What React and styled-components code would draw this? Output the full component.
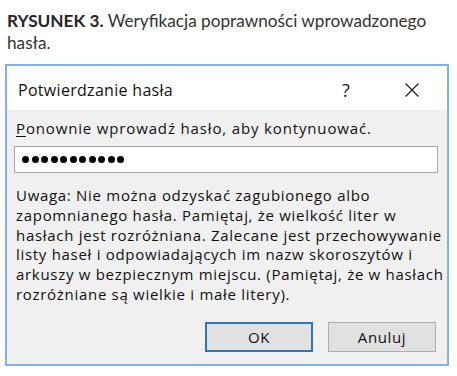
import React from "react";
import styled, { createGlobalStyle } from "styled-components";

const Global = createGlobalStyle`
  html, body { margin: 0; padding: 0; background: #ffffff; }
  body { width: 457px; height: 376px; overflow: hidden; }
`;

const Page = styled.div`
  width: 457px;
  height: 376px;
  display: flex;
  flex-direction: column;
  padding-top: 10px;
  box-sizing: border-box;
`;

const Caption = styled.p`
  margin: 0 0 0 7px;
  width: 440px;
  font-family: Lato, "Open Sans", sans-serif;
  font-size: 17.2px;
  line-height: 22px;
  color: #333;
`;

const CaptionLabel = styled.strong`
  font-weight: 700;
  color: #262626;
`;

const Dialog = styled.div`
  margin: 10px 0 0 5px;
  width: 444px;
  height: 302px;
  box-sizing: border-box;
  border: 2px solid #80b3e3;
  display: flex;
  flex-direction: column;
  font-family: "Open Sans", "Noto Sans", sans-serif;
  color: #111;
`;

const TitleBar = styled.div`
  height: 44px;
  flex: none;
  background: #ffffff;
  display: flex;
  align-items: center;
  padding: 4px 2px 0 11px;
  box-sizing: border-box;
`;

const Title = styled.div`
  flex: 1;
  font-size: 16px;
  letter-spacing: 0.3px;
`;

const TitleButton = styled.div`
  width: 66px;
  height: 40px;
  display: flex;
  align-items: center;
  justify-content: center;
  font-size: 18px;
  color: #222;
`;

const Body = styled.div`
  flex: 1;
  background: #f0f0f0;
  display: flex;
  flex-direction: column;
  padding: 8px 9px 12px 7px;
  font-size: 15px;
  letter-spacing: 0.7px;
`;

const Label = styled.label`
  line-height: 20px;
  padding-left: 2px;
  margin-bottom: 8px;
  letter-spacing: 0.85px;
`;

const Accel = styled.span`
  text-decoration: underline;
  text-underline-offset: 2px;
`;

const PasswordBox = styled.div`
  height: 27px;
  flex: none;
  box-sizing: border-box;
  border: 1px solid #a9a9a9;
  background: #fff;
  display: flex;
  align-items: center;
  gap: 2.5px;
  padding-left: 7px;
`;

const Dot = styled.span`
  width: 7px;
  height: 7px;
  border-radius: 50%;
  background: #000;
`;

const Note = styled.p`
  margin: 13px -8px 0 2px;
  line-height: 19.8px;
  white-space: nowrap;
`;

const Buttons = styled.div`
  display: flex;
  justify-content: flex-end;
  gap: 15px;
  margin-top: auto;
  padding-right: 2px;
`;

const Button = styled.button`
  width: 108px;
  height: 30px;
  box-sizing: border-box;
  background: #e1e1e1;
  border: ${(p) => (p.$primary ? "2px solid #2f73b8" : "1px solid #adadad")};
  font-family: "Open Sans", "Noto Sans", sans-serif;
  font-size: 15px;
  letter-spacing: 0.6px;
  color: #111;
  padding: 0;
`;

function CloseIcon() {
  return (
    <svg width="16" height="16" viewBox="0 0 16 16">
      <path d="M1.5 1.5 L14.5 14.5 M14.5 1.5 L1.5 14.5" stroke="#222" strokeWidth="1.3" fill="none" />
    </svg>
  );
}

const noteLines = [
  "Uwaga: Nie można odzyskać zagubionego albo",
  "zapomnianego hasła. Pamiętaj, że wielkość liter w",
  "hasłach jest rozróżniana. Zalecane jest przechowywanie",
  "listy haseł i odpowiadających im nazw skoroszytów i",
  "arkuszy w bezpiecznym miejscu. (Pamiętaj, że w hasłach",
  "rozróżniane są wielkie i małe litery).",
];

export default function App() {
  return (
    <Page>
      <Global />
      <Caption>
        <CaptionLabel>RYSUNEK 3.</CaptionLabel> Weryfikacja poprawności wprowadzonego hasła.
      </Caption>
      <Dialog>
        <TitleBar>
          <Title>Potwierdzanie hasła</Title>
          <TitleButton>?</TitleButton>
          <TitleButton>
            <CloseIcon />
          </TitleButton>
        </TitleBar>
        <Body>
          <Label>
            <Accel>P</Accel>onownie wprowadź hasło, aby kontynuować.
          </Label>
          <PasswordBox>
            {Array.from({ length: 11 }).map((_, i) => (
              <Dot key={i} />
            ))}
          </PasswordBox>
          <Note>
            {noteLines.map((line, i) => (
              <React.Fragment key={i}>
                {line}
                {i < noteLines.length - 1 && <br />}
              </React.Fragment>
            ))}
          </Note>
          <Buttons>
            <Button $primary>OK</Button>
            <Button>Anuluj</Button>
          </Buttons>
        </Body>
      </Dialog>
    </Page>
  );
}
